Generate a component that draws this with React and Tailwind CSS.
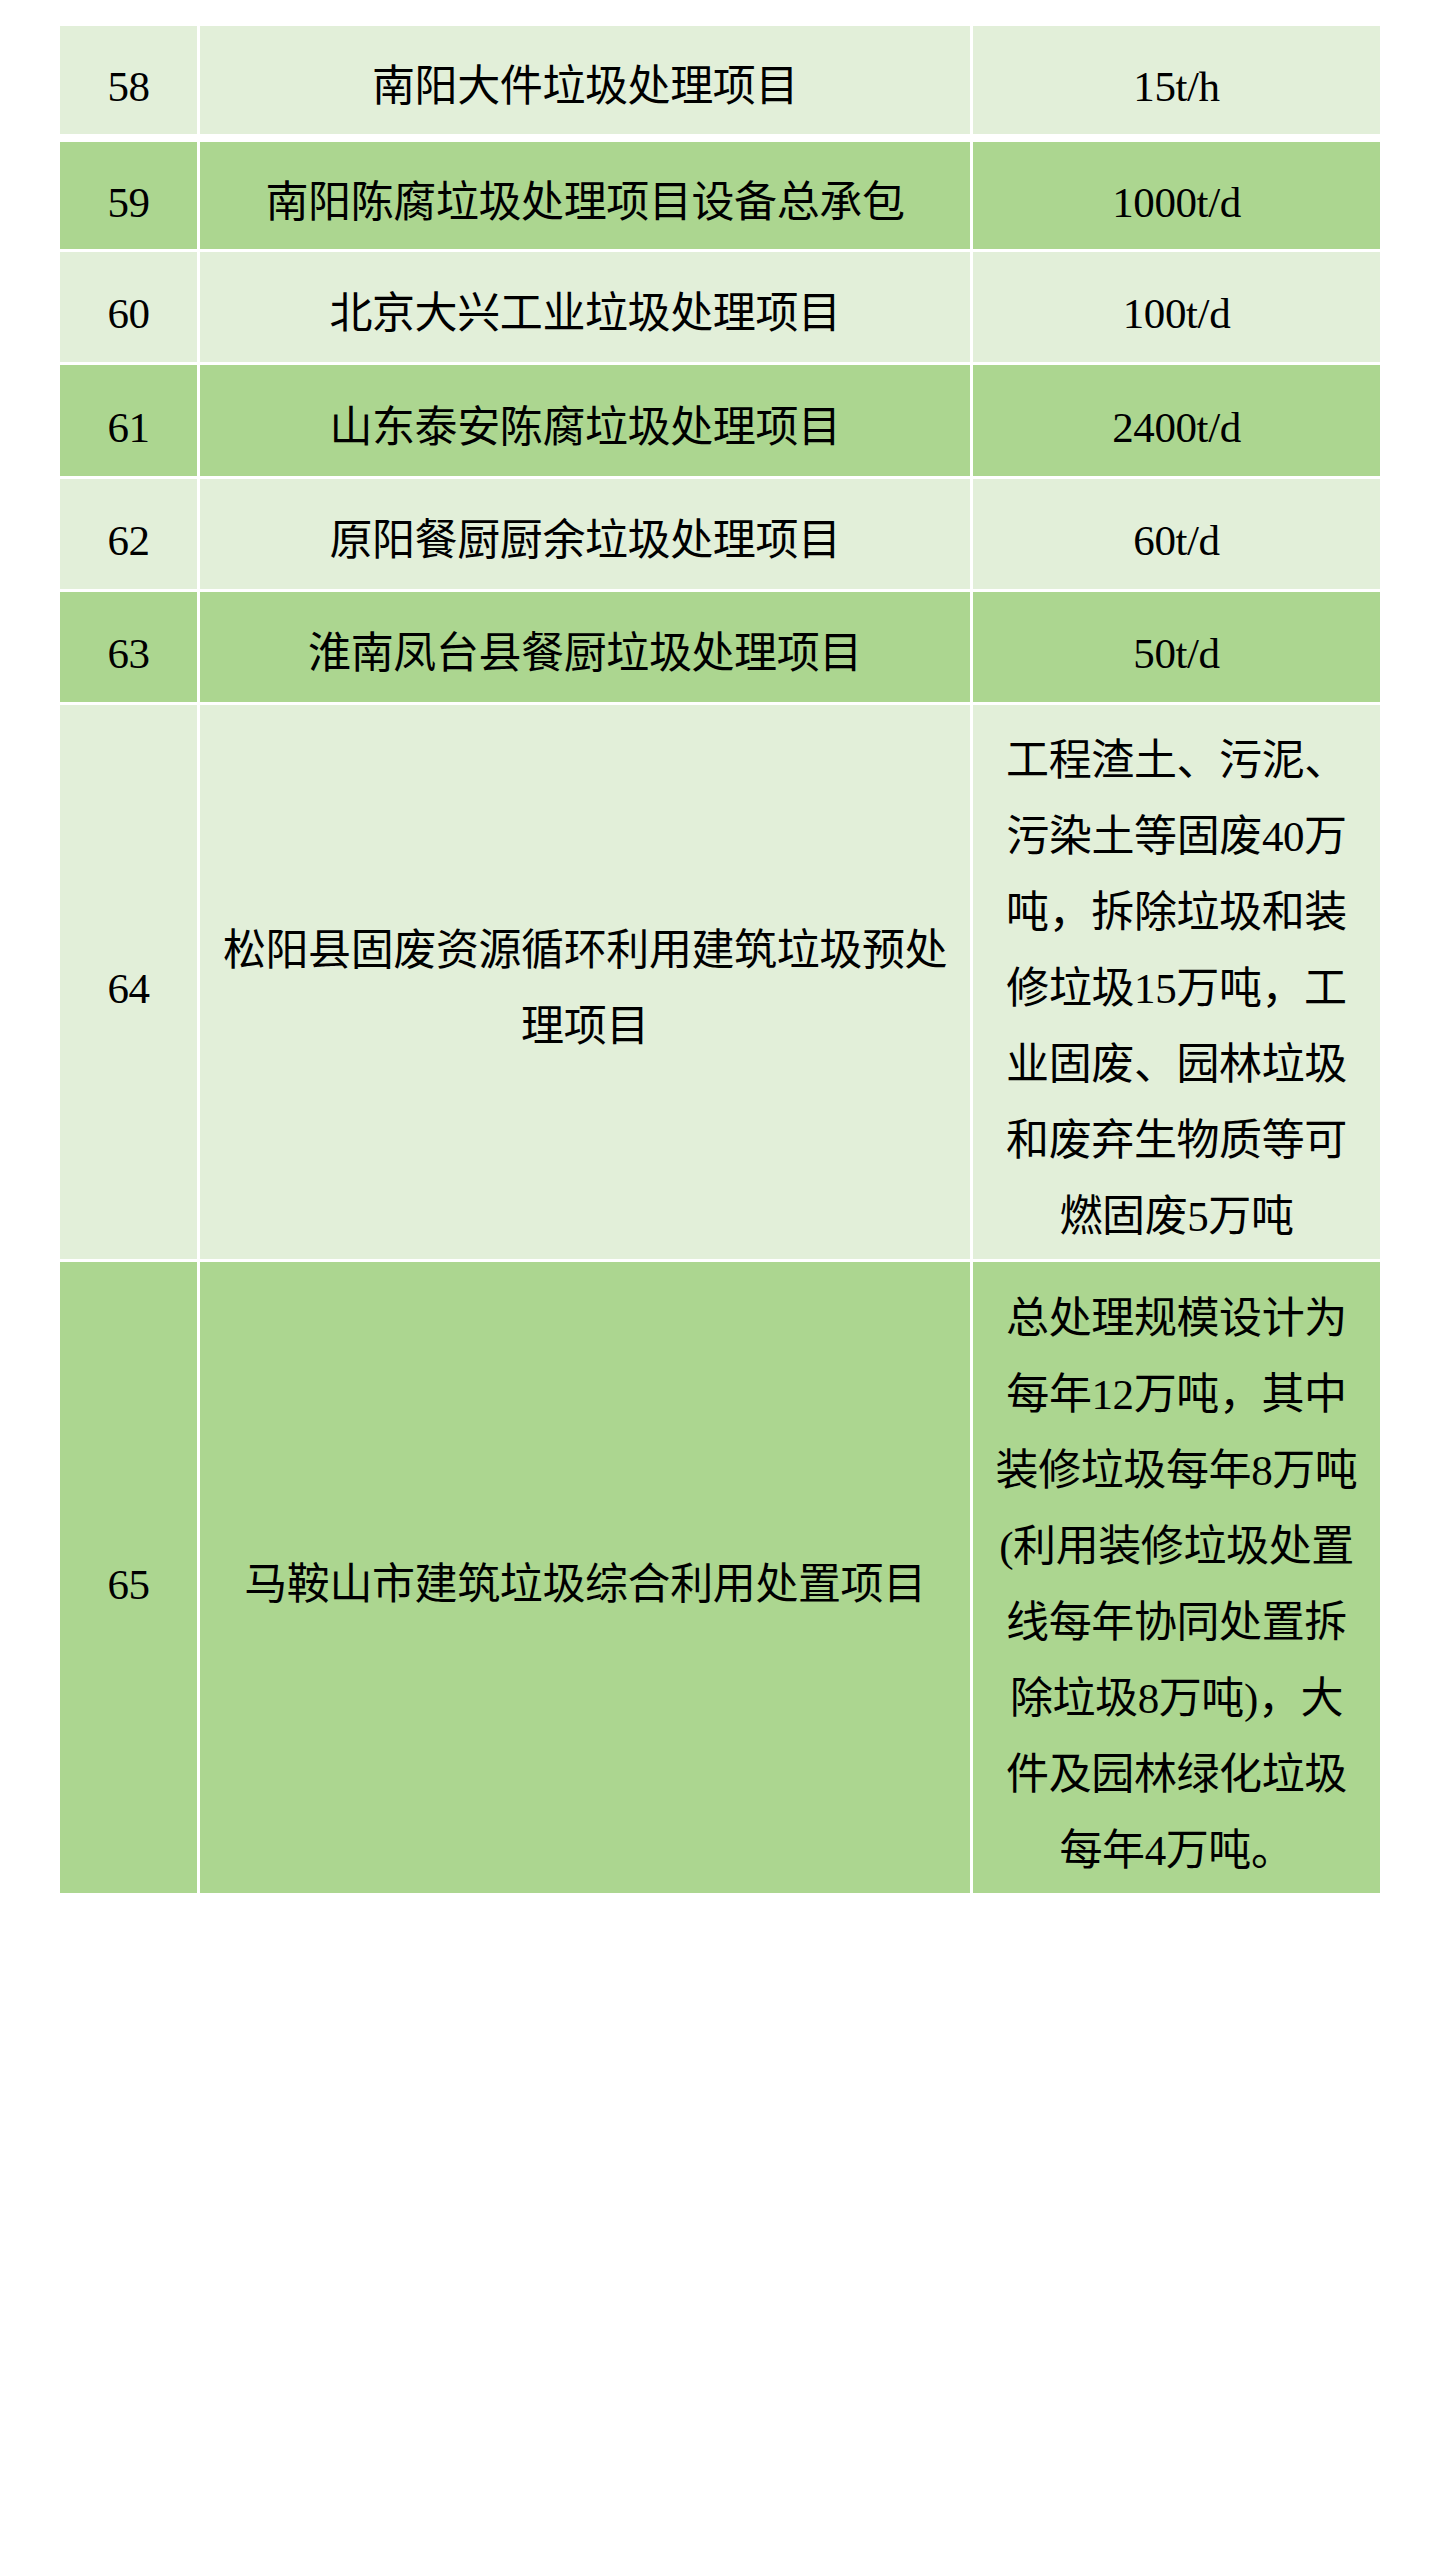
import React from 'react';

const rows = [
  { n: '58', name: ['南阳大件垃圾处理项目'], cap: ['15t/h'], h: 'h-[108px]', dark: false },
  { n: '59', name: ['南阳陈腐垃圾处理项目设备总承包'], cap: ['1000t/d'], h: 'h-[107px]', dark: true },
  { n: '60', name: ['北京大兴工业垃圾处理项目'], cap: ['100t/d'], h: 'h-[110px]', dark: false },
  { n: '61', name: ['山东泰安陈腐垃圾处理项目'], cap: ['2400t/d'], h: 'h-[111px]', dark: true },
  { n: '62', name: ['原阳餐厨厨余垃圾处理项目'], cap: ['60t/d'], h: 'h-[110px]', dark: false },
  { n: '63', name: ['淮南凤台县餐厨垃圾处理项目'], cap: ['50t/d'], h: 'h-[110px]', dark: true },
  {
    n: '64',
    name: ['松阳县固废资源循环利用建筑垃圾预处', '理项目'],
    cap: ['工程渣土、污泥、', '污染土等固废40万', '吨，拆除垃圾和装', '修垃圾15万吨，工', '业固废、园林垃圾', '和废弃生物质等可', '燃固废5万吨'],
    h: 'h-[554px]',
    dark: false,
  },
  {
    n: '65',
    name: ['马鞍山市建筑垃圾综合利用处置项目'],
    cap: ['总处理规模设计为', '每年12万吨，其中', '装修垃圾每年8万吨', '(利用装修垃圾处置', '线每年协同处置拆', '除垃圾8万吨)，大', '件及园林绿化垃圾', '每年4万吨。'],
    h: 'h-[631px]',
    dark: true,
  },
];

const Cell = ({ lines, dark }) => (
  <div className={`${dark ? 'bg-[#acd690]' : 'bg-[#e2efd9]'} flex flex-col items-center justify-center pt-[14px]`}>
    {lines.map((l, i) => (
      <div key={i} className="whitespace-nowrap leading-[76px]">{l}</div>
    ))}
  </div>
);

export default function App() {
  return (
    <div className="bg-white min-h-[2560px] pt-[26px] pl-[60px] font-[family-name:'Liberation_Serif','Noto_Sans_CJK_SC',serif] text-[43px] tracking-[-0.4px] text-black">
      <div className="flex flex-col gap-[3px] w-[1320px]">
        {rows.map((r, i) => (
          <div
            key={r.n}
            className={`grid grid-cols-[137px_770px_407px] gap-x-[3px] ${r.h} ${i === 1 ? 'mt-[5px]' : ''}`}
          >
            <Cell lines={[r.n]} dark={r.dark} />
            <Cell lines={r.name} dark={r.dark} />
            <Cell lines={r.cap} dark={r.dark} />
          </div>
        ))}
      </div>
    </div>
  );
}
